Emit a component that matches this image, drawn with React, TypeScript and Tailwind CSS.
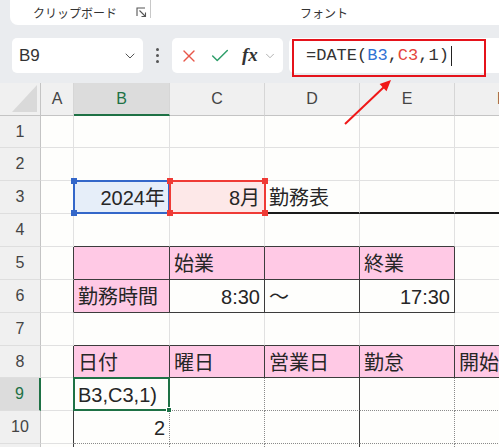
import { X, Check, ChevronDown } from 'lucide-react';

type Cell = { t: string; right?: boolean; bg?: string };

const PINK = 'bg-[#ffc9e5]';

const cells: Record<string, Cell> = {
  '3-1': { t: '2024年', right: true, bg: 'bg-[#e6eef9]' },
  '3-2': { t: '8月', right: true, bg: 'bg-[#fde8e8]' },
  '3-3': { t: '勤務表' },
  '5-1': { t: '', bg: PINK },
  '5-2': { t: '始業', bg: PINK },
  '5-3': { t: '', bg: PINK },
  '5-4': { t: '終業', bg: PINK },
  '6-1': { t: '勤務時間', bg: PINK },
  '6-2': { t: '8:30', right: true },
  '6-3': { t: '～' },
  '6-4': { t: '17:30', right: true },
  '8-1': { t: '日付', bg: PINK },
  '8-2': { t: '曜日', bg: PINK },
  '8-3': { t: '営業日', bg: PINK },
  '8-4': { t: '勤怠', bg: PINK },
  '8-5': { t: '開始', bg: PINK },
  '9-1': { t: 'B3,C3,1)' },
  '10-1': { t: '2', right: true },
};

const LIGHT_R = 'border-r border-r-[#e1e1e1]';
const DARK_R = 'border-r border-r-[#3c3c3c]';
const DOT_R = 'border-r border-r-[#8a8a8a] [border-right-style:dotted]';
const LIGHT_B = 'border-b border-b-[#e1e1e1]';
const DARK_B = 'border-b border-b-[#3c3c3c]';
const DOT_B = 'border-b border-b-[#8a8a8a] [border-bottom-style:dotted]';
const THICK_B = 'border-b-2 border-b-[#1a1a1a]';

function rightBorder(r: number, c: number) {
  if (c === 0) return [5, 6, 8, 9, 10, 11].includes(r) ? DARK_R : LIGHT_R;
  if ((r === 5 || r === 6) && c <= 4) return DARK_R;
  if (r === 8) return DARK_R;
  if (r >= 9) return c === 3 ? DARK_R : DOT_R;
  return LIGHT_R;
}

function bottomBorder(r: number, c: number) {
  if (c === 0) return LIGHT_B;
  if (r === 3 && c >= 3) return THICK_B;
  if ((r === 4 || r === 5 || r === 6) && c <= 4) return DARK_B;
  if (r === 7 || r === 8) return DARK_B;
  if (r === 9 || r === 10) return DOT_B;
  return LIGHT_B;
}

function Handle({ pos, color }: { pos: string; color: string }) {
  return <span className={`absolute w-[6px] h-[6px] ${pos} ${color}`} />;
}

function Selection(props: { border: string; fill: string; corners: 'all' | 'left' | 'fill' }) {
  return (
    <div className={`absolute -top-[1px] -left-[1px] w-[97px] h-[34px] border-2 z-10 ${props.border}`}>
      {props.corners !== 'fill' && (
        <>
          <Handle pos="-top-[4px] -left-[4px]" color={props.fill} />
          <Handle pos="-bottom-[4px] -left-[4px]" color={props.fill} />
        </>
      )}
      {props.corners === 'all' && (
        <>
          <Handle pos="-top-[4px] -right-[4px]" color={props.fill} />
          <Handle pos="-bottom-[4px] -right-[4px]" color={props.fill} />
        </>
      )}
      {props.corners === 'fill' && <Handle pos="-bottom-[4px] -right-[4px] border border-white" color={props.fill} />}
    </div>
  );
}

function GridCell({ r, c }: { r: number; c: number }) {
  const cell = cells[`${r}-${c}`];
  const bg = cell?.bg ?? 'bg-[#fefefc]';
  return (
    <div
      className={`relative flex items-center pt-[2px] px-[4px] whitespace-nowrap text-[20px] leading-none text-[#262626] ${bg} ${rightBorder(r, c)} ${bottomBorder(r, c)} ${cell?.right ? 'justify-end' : 'justify-start'}`}
    >
      {cell?.t}
      {r === 3 && c === 1 && <Selection border="border-[#3467c9]" fill="bg-[#3467c9]" corners="left" />}
      {r === 3 && c === 2 && <Selection border="border-[#ef3b36]" fill="bg-[#ef3b36]" corners="all" />}
      {r === 9 && c === 1 && <Selection border="border-[#1e7145]" fill="bg-[#1e7145]" corners="fill" />}
    </div>
  );
}

export default function App() {
  const letters = ['A', 'B', 'C', 'D', 'E', 'F'];
  const rows = [1, 2, 3, 4, 5, 6, 7, 8, 9, 10, 11];

  return (
    <div className="relative w-[499px] h-[447px] overflow-hidden bg-[#eaecef] font-['Liberation_Sans','Noto_Sans_CJK_JP',sans-serif]">
      {/* ribbon bottom */}
      <div className="flex h-[25px]">
        <div className="w-[10px]" />
        <div className="flex-1 flex items-center bg-white rounded-bl-[8px] text-[12px] text-[#333]">
          <div className="w-[140px] flex items-center">
            <span className="pl-[23px] font-['Noto_Sans_CJK_JP',sans-serif]">クリップボード</span>
            <svg className="ml-auto mr-[3px]" width="11" height="11" viewBox="0 0 11 11" fill="none" stroke="#555" strokeWidth="1.1">
              <path d="M1 9V1h8" />
              <path d="M3.5 3.5L9.5 9.5" />
              <path d="M5.5 9.5h4v-4" />
            </svg>
          </div>
          <div className="self-start w-px h-[18px] bg-[#c8c8c8]" />
          <span className="ml-[149px] font-['Noto_Sans_CJK_JP',sans-serif]">フォント</span>
        </div>
      </div>

      {/* formula bar */}
      <div className="flex h-[35px] mt-[13px]">
        <div className="ml-[12px] w-[131px] flex items-center bg-white rounded-[5px] pl-[7px] pr-[5px]">
          <span className="text-[17px] text-[#333]">B9</span>
          <ChevronDown className="ml-auto" size={16} strokeWidth={1.5} color="#555" />
        </div>
        <div className="w-[29px] flex flex-col items-center justify-center gap-[3px]">
          <span className="w-[3px] h-[3px] rounded-full bg-[#555]" />
          <span className="w-[3px] h-[3px] rounded-full bg-[#555]" />
          <span className="w-[3px] h-[3px] rounded-full bg-[#555]" />
        </div>
        <div className="w-[111px] flex items-center bg-white rounded-[5px] pl-[7px]">
          <X size={20} strokeWidth={1.6} color="#e8574a" />
          <Check className="ml-[10px]" size={22} strokeWidth={1.6} color="#2e9e6a" />
          <span className="ml-[11px] font-['Liberation_Serif',serif] italic font-bold text-[19px] text-[#333]">fx</span>
          <ChevronDown className="ml-[5px]" size={14} strokeWidth={1.3} color="#999" />
        </div>
        <div className="ml-[6px] flex-1 flex items-center bg-white rounded-l-[5px] pl-[17px]">
          <span className="font-['Liberation_Mono',monospace] text-[17px] text-[#333]">
            =DATE(<span className="text-[#2f73d4]">B3</span>,<span className="text-[#e5453b]">C3</span>,1)
          </span>
          <span className="ml-[2px] w-px h-[20px] bg-[#222]" />
        </div>
      </div>

      {/* sheet grid */}
      <div className="mt-[10px] grid grid-cols-[41px_33px_96px_95px_95px_95px_95px] grid-rows-[33px_32px_33px_33px_33px_33px_33px_33px_32px_33px_33px_33px]">
        <div className="flex items-end justify-end pr-[3px] pb-[3px] bg-[#f0f0f0] border-r border-r-[#c4c4c4] border-b border-b-[#c4c4c4]">
          <svg width="25" height="27" viewBox="0 0 25 27">
            <polygon points="25,0 25,27 0,27" fill="#d9d9d9" />
          </svg>
        </div>
        {letters.map((l) => (
          <div
            key={l}
            className={
              l === 'B'
                ? 'flex items-center justify-center bg-[#dcdcdc] text-[16px] text-[#1e7145] border-r border-r-[#d6d6d6] border-b-2 border-b-[#1e7145]'
                : 'flex items-center justify-center bg-[#f0f0f0] text-[16px] text-[#444] border-r border-r-[#d6d6d6] border-b border-b-[#c4c4c4]'
            }
          >
            {l}
          </div>
        ))}
        {rows.map((r) => (
          <div key={r} className="contents">
            <div
              className={
                r === 9
                  ? 'flex items-center justify-center bg-[#dcdcdc] text-[16px] text-[#1e7145] border-r-2 border-r-[#1e7145] border-b border-b-[#dedede]'
                  : 'flex items-center justify-center bg-[#f0f0f0] text-[16px] text-[#444] border-r border-r-[#c4c4c4] border-b border-b-[#dedede]'
              }
            >
              {r < 11 ? r : ''}
            </div>
            {letters.map((_, c) => (
              <GridCell key={c} r={r} c={c} />
            ))}
          </div>
        ))}
      </div>

      {/* annotation: red box and arrow */}
      <div className="absolute left-[292px] top-[39px] w-[194px] h-[38px] border-2 border-[#e5131b]" />
      <svg className="absolute left-0 top-0 pointer-events-none" width="499" height="447">
        <line x1="345" y1="124" x2="384" y2="87" stroke="#f01818" strokeWidth="2" />
        <polygon points="391,80 386.5,91.2 379.6,84" fill="#f01818" />
      </svg>
    </div>
  );
}
